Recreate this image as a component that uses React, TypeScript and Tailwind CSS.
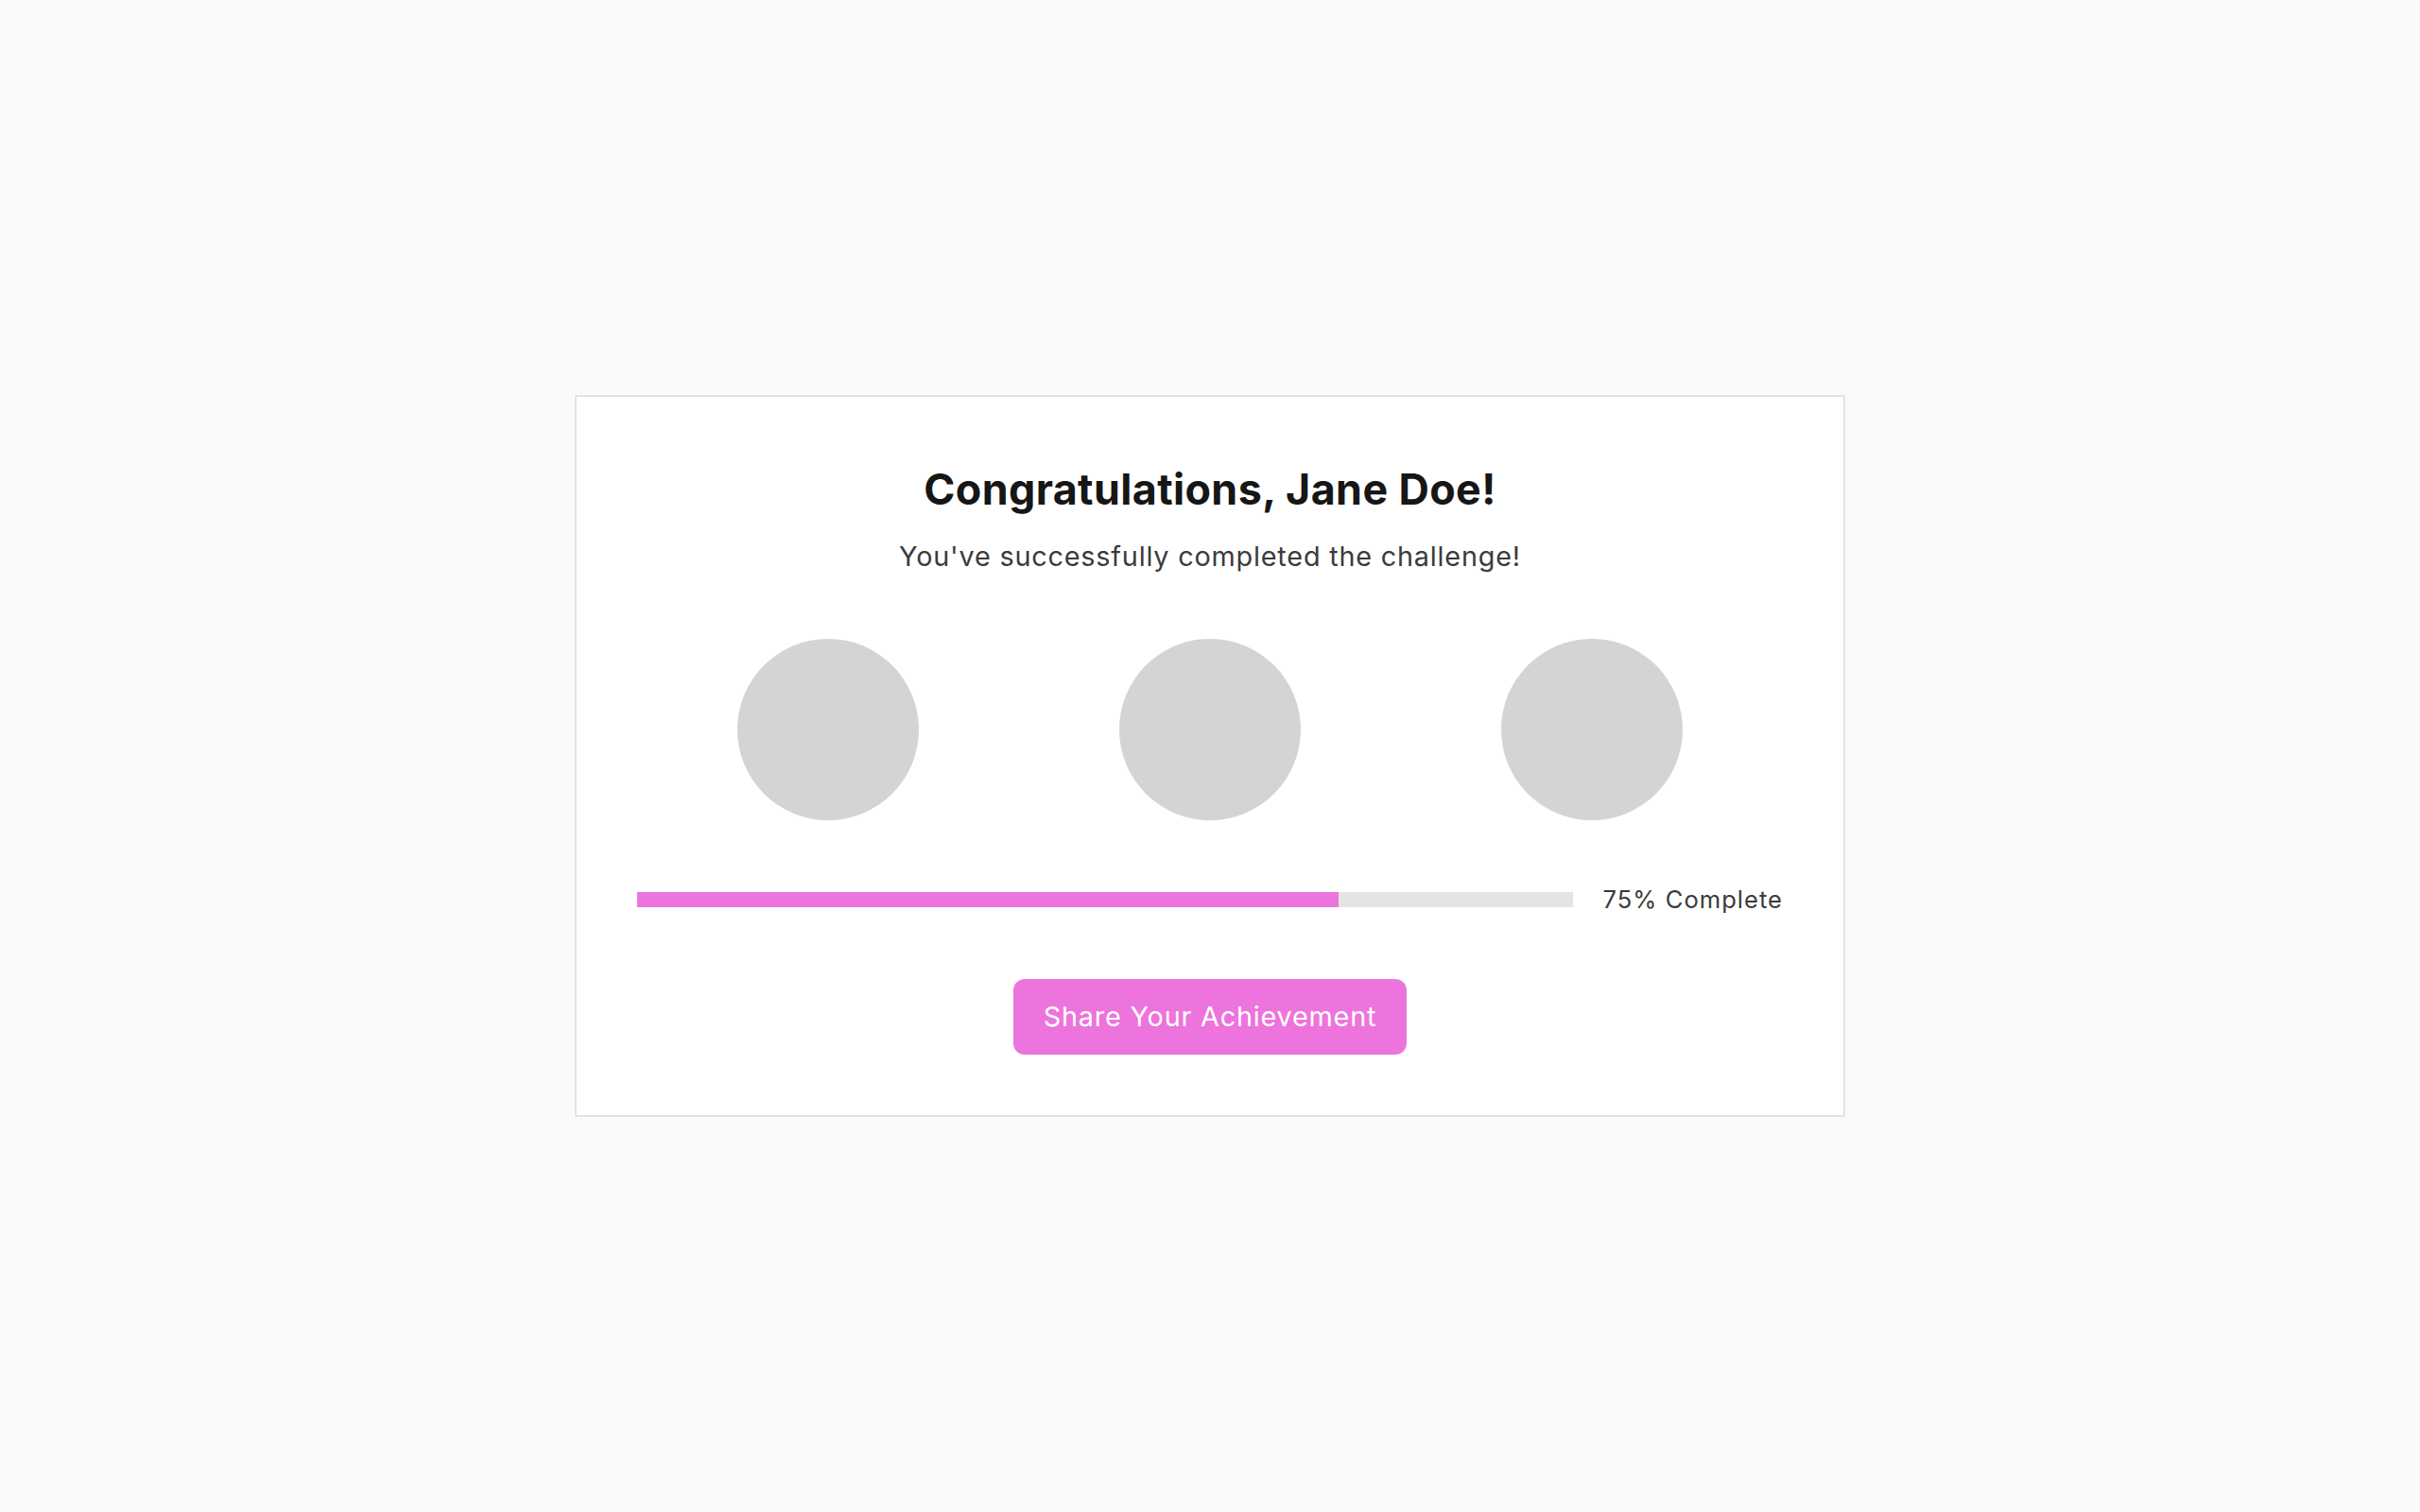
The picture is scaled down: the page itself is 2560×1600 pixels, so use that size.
import React from "react";

const progress = 75;

export default function App() {
  return (
    <div
      className="min-h-screen w-full bg-[#fafafa] flex items-center justify-center"
      style={{ fontFamily: "Inter, 'Noto Sans', sans-serif" }}
    >
      <div className="w-[1344px] bg-white border-2 border-[#e3e3e3] p-16 flex flex-col items-center">
        <h1 className="text-[44.8px] leading-[68px] font-bold tracking-[0.4px] text-[#161616]">
          Congratulations, Jane Doe!
        </h1>
        <p className="mt-[19px] text-[28.8px] leading-[36px] tracking-[0.8px] text-[#3b3b3b]">
          You've successfully completed the challenge!
        </p>

        <div className="mt-[69px] w-full flex justify-around">
          <div className="w-48 h-48 rounded-full bg-[#d4d4d4]" />
          <div className="w-48 h-48 rounded-full bg-[#d4d4d4]" />
          <div className="w-48 h-48 rounded-full bg-[#d4d4d4]" />
        </div>

        <div className="mt-16 w-full flex items-center gap-8">
          <div className="flex-1 h-4 bg-[#e4e4e4]">
            <div
              className="h-full bg-[#ec74dc]"
              style={{ width: `${progress}%` }}
            />
          </div>
          <span className="text-[25.6px] leading-[40px] tracking-[1px] text-[#3b3b3b]">
            {progress}% Complete
          </span>
        </div>

        <button className="mt-16 h-20 px-8 rounded-xl bg-[#ec74dc] text-white text-[28.8px] leading-[40px] tracking-[0.8px]">
          Share Your Achievement
        </button>
      </div>
    </div>
  );
}
